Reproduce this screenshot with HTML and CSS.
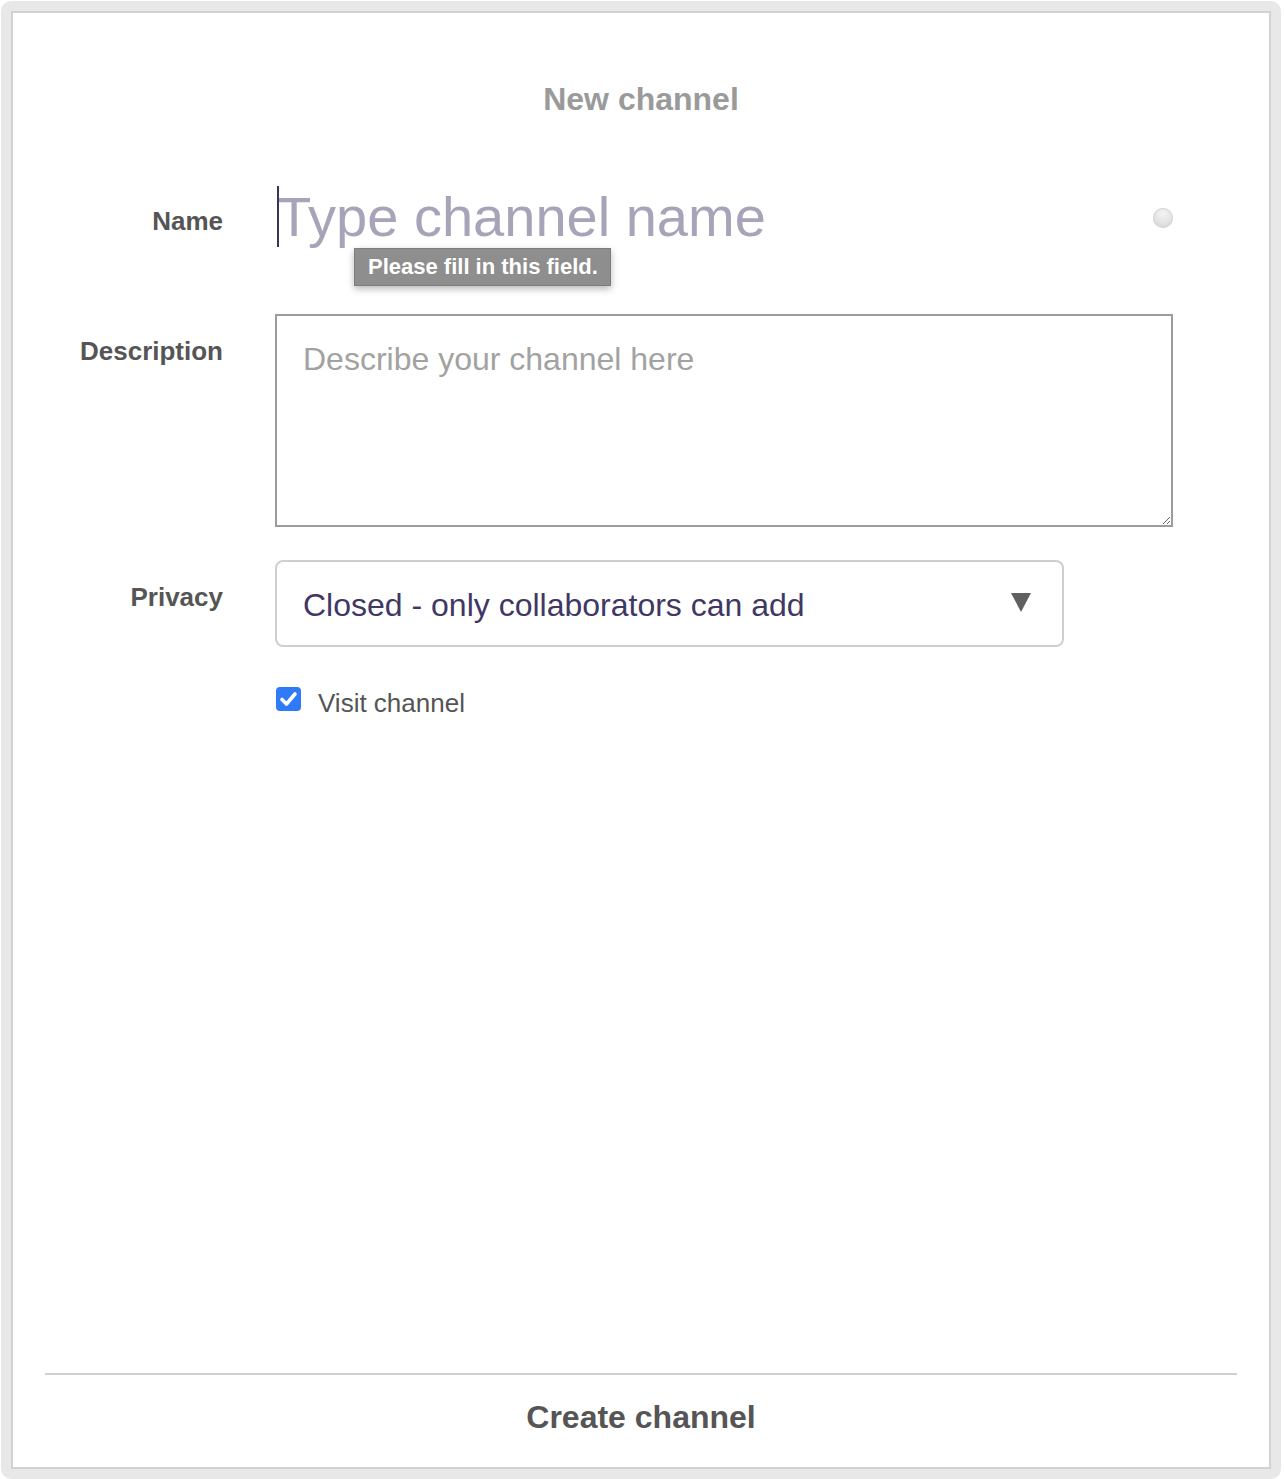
FILE: index.html
```html
<!DOCTYPE html>
<html lang="en">
<head>
<meta charset="utf-8">
<title>New channel</title>
<link rel="stylesheet" href="styles.css">
</head>
<body>
<div class="frame">
  <div class="panel">
    <h1 class="title">New channel</h1>
    <form class="form">
      <div class="row row-name">
        <label class="label label-name" for="name">Name</label>
        <div class="name-field">
          <input id="name" class="name-input" type="text" placeholder="Type channel name">
          <span class="status-dot"></span>
          <div class="tooltip">Please fill in this field.</div>
        </div>
      </div>
      <div class="row row-desc">
        <label class="label label-desc" for="desc">Description</label>
        <textarea id="desc" class="desc-input" placeholder="Describe your channel here"></textarea>
      </div>
      <div class="row row-privacy">
        <label class="label label-privacy" for="privacy">Privacy</label>
        <div class="select-wrap">
          <select id="privacy" class="privacy-select">
            <option>Closed - only collaborators can add</option>
          </select>
          <svg class="select-arrow" width="20" height="20" viewBox="0 0 20 20"><polygon points="0,1 20,1 10,20" fill="#606060"/></svg>
        </div>
      </div>
      <div class="row row-visit">
        <span class="label-spacer"></span>
        <label class="visit">
          <span class="checkbox"><svg width="25" height="24" viewBox="0 0 25 24"><path d="M6 12.5 L10.5 17 L19 7" fill="none" stroke="#fff" stroke-width="3.6" stroke-linecap="round" stroke-linejoin="round"/></svg></span>
          <span class="visit-text">Visit channel</span>
        </label>
      </div>
    </form>
    <div class="spacer"></div>
    <div class="footer">
      <div class="divider"></div>
      <button type="button" class="create-btn">Create channel</button>
    </div>
  </div>
</div>
</body>
</html>
```
FILE: styles.css
```css
* { box-sizing: border-box; }
html, body {
  margin: 0;
  padding: 0;
  background: #fff;
  font-family: "Liberation Sans", Arial, Helvetica, sans-serif;
}
body {
  width: 1284px;
  height: 1479px;
  overflow: hidden;
  padding: 1px 0 0 1px;
}
.frame {
  width: 1280px;
  height: 1478px;
  background: #e8e8e8;
  border-radius: 10px;
  padding: 10px;
}
.panel {
  height: 100%;
  background: #fff;
  border: 2px solid #d2d2d2;
  display: flex;
  flex-direction: column;
}
.title {
  margin: 66px 0 0;
  font-size: 32px;
  line-height: 40px;
  font-weight: bold;
  color: #9a9a9a;
  text-align: center;
}
.form {
  margin: 67px 0 0;
  display: flex;
  flex-direction: column;
}
.row {
  display: flex;
  align-items: flex-start;
  gap: 52px;
}
.label, .label-spacer {
  flex: 0 0 210px;
  width: 210px;
  text-align: right;
  font-size: 26px;
  line-height: 30px;
  font-weight: bold;
  color: #555;
}
.label-name { margin-top: 20px; }
.label-desc { margin-top: 22px; }
.label-privacy { margin-top: 22px; }

.name-field {
  position: relative;
  width: 898px;
  height: 62px;
  display: flex;
  align-items: center;
}
.name-field::before {
  content: "";
  position: absolute;
  left: 2px;
  top: 0;
  width: 2px;
  height: 61px;
  background: #3b3358;
}
.name-input {
  flex: 1;
  height: 62px;
  border: none;
  outline: none;
  padding: 0 0 0 2px;
  margin: 0;
  background: transparent;
  font-family: "Liberation Sans", Arial, sans-serif;
  font-size: 56px;
  line-height: 62px;
  color: #3b3358;
  caret-color: transparent;
}
.name-input::placeholder { color: #a8a3b9; }
.status-dot {
  flex: 0 0 20px;
  width: 20px;
  height: 20px;
  margin-top: 2px;
  border-radius: 50%;
  background: radial-gradient(circle at 50% 30%, #f4f4f4 0%, #e2e2e2 55%, #cfcfcf 100%);
  box-shadow: inset 0 0 0 1px #d6d6d6;
}
.tooltip {
  position: absolute;
  left: 79px;
  top: 62px;
  height: 38px;
  padding: 0 12px 0 13px;
  background: #8e8e8e;
  border: 1px solid #7d7d7d;
  color: #fff;
  font-size: 22px;
  font-weight: bold;
  line-height: 36px;
  white-space: nowrap;
  box-shadow: 0 3px 7px rgba(0,0,0,0.28);
}

.row-desc { margin-top: 66px; }
.desc-input {
  width: 898px;
  height: 213px;
  border: 2px solid #9c9c9c;
  border-radius: 0;
  padding: 25px 26px;
  margin: 0;
  font-family: "Liberation Sans", Arial, sans-serif;
  font-size: 32px;
  color: #333;
  outline: none;
  resize: both;
  background: #fff;
}
.desc-input::placeholder { color: #a2a2a2; }

.row-privacy { margin-top: 33px; }
.select-wrap {
  position: relative;
  width: 789px;
  height: 87px;
}
.privacy-select {
  appearance: none;
  -webkit-appearance: none;
  width: 100%;
  height: 87px;
  border: 2px solid #cfcfcf;
  border-radius: 8px;
  background: #fff;
  padding: 2px 70px 0 26px;
  margin: 0;
  font-family: "Liberation Sans", Arial, sans-serif;
  font-size: 32px;
  color: #3f3865;
  outline: none;
}
.select-arrow {
  position: absolute;
  right: 33px;
  top: 32px;
}

.row-visit { margin-top: 40px; }
.visit {
  display: flex;
  align-items: center;
  height: 32px;
  margin-left: 1px;
}
.checkbox {
  width: 25px;
  height: 24px;
  border-radius: 4px;
  background: #2f7af6;
  display: flex;
  margin-bottom: 8px;
}
.visit-text {
  margin-left: 17px;
  font-size: 26px;
  color: #555;
  line-height: 32px;
}

.spacer { flex: 1; }
.footer {
  display: flex;
  flex-direction: column;
}
.divider {
  margin: 0 32px;
  height: 2px;
  background: #d0d0d0;
}
.create-btn {
  margin: 22px 0 30px;
  padding: 0;
  border: none;
  background: transparent;
  font-family: "Liberation Sans", Arial, sans-serif;
  font-size: 32px;
  line-height: 40px;
  font-weight: bold;
  color: #555;
  text-align: center;
  cursor: pointer;
}
```
